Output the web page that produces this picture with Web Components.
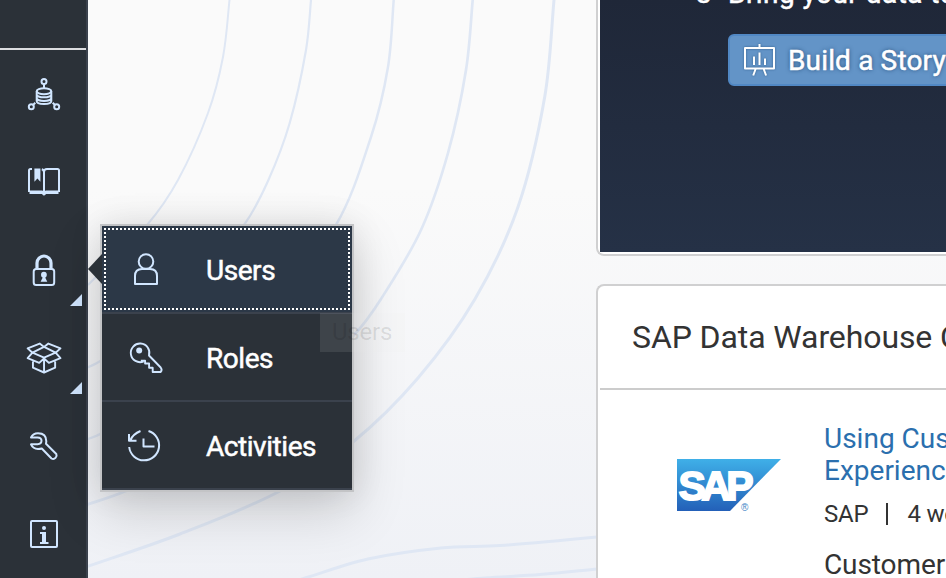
<!DOCTYPE html>
<html lang="en"><head><meta charset="utf-8"><title>Home</title>
<style>html,body{margin:0;height:100%;overflow:hidden;font-family:Roboto,"Open Sans",sans-serif}</style></head>
<body>
<app-shell></app-shell>
<script>
const define=(name,html,init)=>customElements.define(name,class extends HTMLElement{
  connectedCallback(){
    if(this.shadowRoot)return;
    const t=document.createElement('template');t.innerHTML=html;
    this.attachShadow({mode:'open'}).append(t.content.cloneNode(true));
    if(init)init.call(this,this.shadowRoot);
  }
});

const icons={
 data:'<circle cx="16" cy="3.6" r="2.5"/><path d="M16 6v4"/><ellipse cx="16" cy="13.2" rx="7.3" ry="3"/><path d="M8.7 13.2V23c0 1.800 3.300 3 7.300 3s7.300-1.200 7.300-3v-9.800M8.700 16.800c.6 1.700 3.600 2.500 7.300 2.500s6.700-.8 7.300-2.500M8.700 20.400c.6 1.700 3.600 2.500 7.300 2.500s6.700-.8 7.300-2.500"/><circle cx="3.300" cy="28.800" r="2.500"/><circle cx="28.700" cy="28.800" r="2.500"/><path d="M5 27l2.300-2.300M27 27l-2.300-2.300"/>',
 book:'<path d="M4 3H2.500Q1 3 1 4.500V26M31 26V4.500Q31 3 29.500 3H19q-3 0-3 3v20.500M13.800 3.200q2.200.6 2.200 3"/><path d="M1.500 26.200h12.500q1.300 0 2 1.600.7-1.600 2-1.600h12.500" stroke-width="3.400"/><path d="M6.400 2.500h6v13.300l-3-3.300-3 3.300z" fill="currentColor" stroke="none"/>',
 lock:'<g transform="translate(-.3 -.7)"><rect x="6" y="15.800" width="20.500" height="16" rx="2.500"/><path d="M9.300 15.500V9.700a7 7 0 0 1 14 0V15.500" stroke-width="3.200"/><circle cx="16.200" cy="21.400" r="2.900" fill="currentColor" stroke="none"/><path d="M14.900 22h2.700v2.500l2 4h-6.700l2-4z" fill="currentColor" stroke="none"/></g>',
 box:'<path d="M11.500 1.500 16 5l4.500-3.500L33 6.500l-5 4.500 5 5.700-12 4.800L16 17l-5 4.500L-1 16.700 4 11-1 6.500zM4 11l12-6 12 6-12 5zM4.500 20v6.500L16 31.500l11.500-5V20M16 17v14" transform="translate(.6 .1) scale(.965)"/>',
 wrench:'<path d="M3 7.500Q5 3.300 10 3.300q8.300 0 8.300 8l-.3 2.500L28.300 24q1 2-.8 3.900t-4 .6L13.800 18.500Q12 19 10 19q-5-.3-7-4.700h6.500q4-.3 4-3.500t-4-3.300z"/>',
 info:'<rect x="3" y="3" width="26" height="26" rx="1"/><circle cx="16" cy="10" r="2" fill="currentColor" stroke="none"/><path d="M12 14h6v10h2.500v2h-8.500v-2H14v-8h-2z" fill="currentColor" stroke="none"/>',
 user:'<circle cx="16" cy="8.500" r="7.300"/><path d="M5 31v-8q0-7 7-7h8q7 0 7 7v8z"/>',
 key:'<path d="M13.500 20.500A9.300 9.300 0 1 1 19 14.500l11.700 12q1.800 2.200 0 4.500h-8v-4.200h-3.600v-4.300h-4V19.800h-4.300" stroke-width="1.900"/><circle cx="9.200" cy="9.500" r="3" fill="currentColor" stroke="none"/>',
 history:'<path transform="translate(-2 .5)" d="M20.500 1.500A15 15 0 1 1 1.200 17.500M12.500 1.500Q5 4.500 2.200 11M1 4.500v6.800h7.500M15.500 9v8H26.500"/>',
 board:'<path d="M1 4h29v20.500H1zM15.500 0v4M11.800 24.500 9.200 31.500M19.500 24.500l2.600 7M10 12.500v8.500M15.500 8.500V21M21 14.500V21"/>'
};
customElements.define('ui-icon',class extends HTMLElement{
  connectedCallback(){
    if(this.shadowRoot)return;
    const r=this.attachShadow({mode:'open'});
    r.innerHTML=`<style>:host{display:block;width:32px;height:32px;flex:none}svg{display:block;overflow:visible}</style>
    <svg width="32" height="32" viewBox="0 0 32 32" fill="none" stroke="currentColor" stroke-width="2" stroke-linejoin="round">${icons[this.getAttribute('name')]}</svg>`;
  }
});

define('nav-item',`<style>
 :host{display:grid;place-items:center;height:88px;color:#d1e6ff;position:relative}
 i{display:none;position:absolute;right:4px;bottom:8px;width:12px;height:12px;background:#d1e6ff;clip-path:polygon(100% 0,100% 100%,0 100%)}
 :host([more]) i{display:block}
 </style><i></i>`,function(r){
  const n=document.createElement('ui-icon');
  n.setAttribute('name',this.getAttribute('icon'));r.append(n);
 });

define('side-nav',`<style>
 :host{display:flex;flex-direction:column;box-sizing:border-box;width:88px;height:578px;background:#2b3138;border-right:2px solid #3b424d;overflow:hidden}
 .top{height:48px;flex:none;border-bottom:2px solid #dcdde0}
 nav{display:flex;flex-direction:column;padding-left:2px}
 </style><div class="top"></div><nav>
 <nav-item icon="data"></nav-item><nav-item icon="book"></nav-item><nav-item icon="lock" more></nav-item>
 <nav-item icon="box" more></nav-item><nav-item icon="wrench"></nav-item><nav-item icon="info"></nav-item></nav>`);

define('contour-lines',`<style>:host{display:block;overflow:hidden}svg{display:block}</style>
 <svg width="858" height="578" viewBox="88 0 858 578" fill="none"></svg>`,function(r){
  const lines=[
   [2,[230,-10],[229.5,0],[223,57],[208,113],[178,180],[147,225],[88,285]],
   [2.2,[311.300,-10],[311,0],[306,50],[289.700,123],[268,181],[244,225],[180,305],[102,360],[80,371]],
   [2.5,[394,-10],[393.700,0],[388,67],[371,137],[336,225],[250,345],[102,433],[80,442]],
   [2.700,[473,-10],[472.700,0],[466,70],[448,153],[421,230],[381,299],[354,335],[260,425],[128,490],[80,507]],
   [3,[554.300,-10],[554,0],[544.700,97],[518,207],[475,299],[418,378],[353,442],[280,491],[180,534],[80,569]],
   [3,[290,583],[305,578],[368,559],[441,548],[500,545.500],[597,537],[640,532]],
   [3,[440,582],[485,578],[540,574.500],[597,569],[640,564]]];
  r.querySelector('svg').innerHTML=lines.map(([w,...p])=>{
   let d='M'+p[0];
   for(let i=0;i<p.length-1;i++){
    const a=p[i-1]||p[i],b=p[i],c=p[i+1],e=p[i+2]||c;
    const len=Math.hypot(c[0]-b[0],c[1]-b[1]);
    const tan=(u,v)=>{const l=Math.hypot(v[0]-u[0],v[1]-u[1])||1;return[(v[0]-u[0])/l*len/3,(v[1]-u[1])/l*len/3]};
    const m=tan(a,c),n=tan(b,e);
    d+=`C${b[0]+m[0]} ${b[1]+m[1]} ${c[0]-n[0]} ${c[1]-n[1]} ${c}`;
   }
   return `<path d="${d}" stroke="#dfe7f4" stroke-width="${w}"/>`;}).join('');
 });

define('story-banner',`<style>
 :host{display:block;box-sizing:border-box;height:256px;border:solid #d0d0d1;border-width:0 0 2px 2px;border-radius:0 0 0 8px;background:#fff;padding:0 0 2px 2px}
 section{display:flex;flex-direction:column;align-items:flex-start;height:100%;background:linear-gradient(#1f2738,#253146);padding-left:96px;box-sizing:border-box;white-space:nowrap;color:#fff;overflow:hidden;-webkit-text-stroke:.5px #fff}
 .row{display:flex;height:56px;font-size:28px;line-height:32px;margin-top:-22px;flex:none}
 .row b{font-weight:400;width:32px}
 .row span{letter-spacing:.45px}
 .btn{display:flex;align-items:center;box-sizing:border-box;width:300px;height:52px;flex:none;margin-left:32px;padding-left:14px;gap:12px;border:2px solid #5188c4;border-radius:6px;background:#6394c7;font-size:28px;text-shadow:0 0 4px #234a75}
 .btn ui-icon{filter:drop-shadow(0 0 1px #35628f)}
 .btn span{letter-spacing:.15px}
 </style><section><div class="row"><b>3</b><span>Bring your data to life</span></div>
 <div class="btn"><ui-icon name="board"></ui-icon><span>Build a Story</span></div></section>`);

define('sap-logo',`<style>:host{display:block;width:104px;height:52px}svg{display:block;overflow:visible}</style>
 <svg width="104" height="52"><defs><linearGradient id="g" x2="0" y2="1"><stop stop-color="#3fb0e8"/><stop offset="1" stop-color="#2360b8"/></linearGradient></defs>
 <path d="M0 0h104L53 52H0z" fill="url(#g)"/>
 <text x="1.500" y="40.500" font-family="Liberation Sans" font-weight="700" font-size="41" textLength="75" lengthAdjust="spacing" fill="#fff" stroke="#fff" stroke-width="1.800">SAP</text>
 <text x="64" y="52" font-family="Liberation Sans" font-size="10" fill="#3d86c6">®</text></svg>`);

define('course-card',`<style>
 :host{display:block;box-sizing:border-box;height:310px;border:solid #d0d0d1;border-width:2px 0 0 2px;border-radius:8px 0 0 0;background:#fff;padding-left:2px;white-space:nowrap;color:#333;overflow:hidden}
 h2{margin:0;height:102px;line-height:102px;padding-left:32px;border-bottom:2px solid #ccc;font-size:32px;font-weight:400;letter-spacing:-.1px}
 .body{display:grid;grid-template-columns:147px 1fr;padding:33px 0 0 77px}
 sap-logo{margin-top:36px}
 a{display:block;font-size:28px;line-height:32px;color:#2b6fae}
 .meta{display:flex;font-size:24px;line-height:32px;margin-top:11px}
 .meta span{letter-spacing:-.2px}
 .meta i{width:2px;height:22px;background:#333;margin:5px 19px 0 18px}
 p{margin:19px 0 0;font-size:28px;line-height:32px;letter-spacing:-.1px}
 </style><h2><span>SAP Data Warehouse Cloud</span></h2>
 <div class="body"><sap-logo></sap-logo><div><a>Using Customer<br>Experience Data</a>
 <div class="meta"><span>SAP</span><i></i><span>4 weeks</span></div><p>Customer experience</p></div></div>`);

define('menu-item',`<style>
 :host{display:flex;align-items:center;box-sizing:border-box;height:88px;padding-left:28px;gap:44px;border-bottom:2px solid #3b424d;background:#2b3138;color:#fff;font-size:28px;letter-spacing:-.45px;position:relative}
 ui-icon{color:#d1e6ff}
 span{-webkit-text-stroke:.5px #fff;padding-top:2px}
 :host([selected]){background:#2c3847}
 :host([selected])::after{content:"";position:absolute;inset:2px;border:2px dotted #fff}
 </style><ui-icon></ui-icon><span><slot></slot></span>`,function(r){
  const n=document.createElement('ui-icon');n.setAttribute('name',this.getAttribute('icon'));r.querySelector('ui-icon').replaceWith(n);
 });

define('flyout-menu',`<style>
 :host{display:block;position:absolute;left:100px;top:224px;width:250px;border:2px solid #c3c4c6;box-shadow:0 20px 50px rgba(0,0,0,.16),0 0 32px rgba(0,0,0,.09)}
 .arrow{position:absolute;left:-14px;top:28px;width:14px;height:30px;background:#2b3138;clip-path:polygon(100% 0,100% 100%,0 50%)}
 </style><div class="arrow"></div><slot></slot>`);

define('tool-tip',`<style>
 :host{display:block;position:absolute;left:320px;top:313px;width:85px;height:39px;line-height:39px;box-sizing:border-box;padding-left:12px;font-size:24px;letter-spacing:-.2px;background:rgba(236,236,236,.1);color:rgba(0,0,0,.11)}
 </style><slot></slot>`);

define('app-shell',`<style>
 :host{display:grid;grid-template-columns:88px 1fr;width:946px;height:578px;position:relative;overflow:hidden;background:linear-gradient(#fafafa 0,#fafafa 190px,#eff1f6 578px)}
 main{display:grid;overflow:hidden}
 contour-lines,.cards{grid-area:1/1}
 .cards{display:flex;flex-direction:column;gap:28px;padding-left:508px;z-index:1}
 </style><side-nav></side-nav><main><contour-lines></contour-lines>
 <div class="cards"><story-banner></story-banner><course-card></course-card></div></main>
 <flyout-menu><menu-item icon="user" selected>Users</menu-item><menu-item icon="key">Roles</menu-item><menu-item icon="history">Activities</menu-item></flyout-menu>
 <tool-tip>Users</tool-tip>`);
</script></body></html>
